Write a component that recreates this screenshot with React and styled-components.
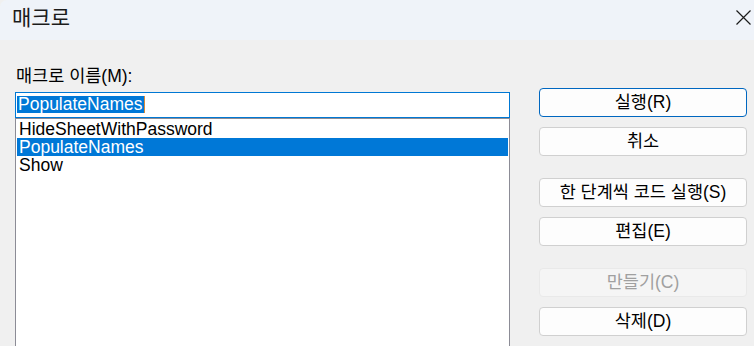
import React from "react";
import styled, { createGlobalStyle } from "styled-components";

const Global = createGlobalStyle`
  html, body { margin: 0; padding: 0; background: #f0f0f0; }
  body { font-family: "Liberation Sans", "Noto Sans CJK KR", sans-serif; color: #000; }
  * { box-sizing: border-box; }
`;

const FONT = `"Liberation Sans", "Noto Sans CJK KR", sans-serif`;

const Window = styled.div`
  width: 754px;
  height: 346px;
  overflow: hidden;
  display: flex;
  flex-direction: column;
  background: #f0f0f0;
`;

const TitleBar = styled.div`
  height: 40px;
  flex: none;
  background: #eff3f9;
  border-top-left-radius: 7px;
  display: flex;
  align-items: flex-start;
  justify-content: space-between;
  padding: 4px 3px 0 12px;
`;

const Title = styled.div`
  font-family: ${FONT};
  font-size: 21px;
  line-height: 28px;
  color: #1b1b1b;
`;

const CloseButton = styled.div`
  width: 15px;
  height: 15px;
  margin-top: 6px;
  display: flex;
`;

const Body = styled.div`
  flex: 1;
  display: flex;
  gap: 29px;
  padding: 0 7px 0 15px;
  min-height: 0;
`;

const LeftColumn = styled.div`
  width: 495px;
  flex: none;
  display: flex;
  flex-direction: column;
  padding-top: 26px;
`;

const Label = styled.div`
  font-family: ${FONT};
  font-size: 17.5px;
  line-height: 20px;
  height: 20px;
  margin: 0 0 6px 1px;
  color: #000;
`;

const NameInput = styled.div`
  height: 26px;
  border: 1px solid #0078d4;
  background: #fff;
  padding: 3px 1px 0 1px;
  display: flex;
  align-items: flex-start;
`;

const Selected = styled.span`
  font-family: ${FONT};
  font-size: 17.5px;
  line-height: 17px;
  height: 17px;
  background: #0078d7;
  color: #fff;
  padding: 0 1px;
`;

const Caret = styled.span`
  width: 1px;
  height: 17px;
  background: #d98a3a;
`;

const ListBox = styled.div`
  flex: 1;
  border: 1px solid #8c8c96;
  border-bottom: none;
  background: #fff;
  padding: 1px 1px 0 1px;
`;

const ListItem = styled.div`
  font-family: ${FONT};
  font-size: 17.5px;
  line-height: 18px;
  height: 18px;
  overflow: hidden;
  padding-left: 2px;
  white-space: nowrap;
  background: ${(p) => (p.$selected ? "#0078d7" : "transparent")};
  color: ${(p) => (p.$selected ? "#fff" : "#000")};
`;

const RightColumn = styled.div`
  width: 208px;
  flex: none;
  display: flex;
  flex-direction: column;
  padding-top: 48px;
  gap: 22px;
`;

const ButtonGroup = styled.div`
  display: flex;
  flex-direction: column;
  gap: 10px;
`;

const Button = styled.div`
  height: 29px;
  border-radius: 4px;
  border: 1px solid
    ${(p) => (p.$default ? "#0067c0" : p.$disabled ? "#e9e9e9" : "#d0d0d0")};
  background: ${(p) => (p.$disabled ? "#f5f5f5" : "#fdfdfd")};
  color: ${(p) => (p.$disabled ? "#a0a0a0" : "#000")};
  font-family: ${FONT};
  font-size: 17.5px;
  line-height: 27px;
  text-align: center;
  white-space: nowrap;
`;

const macros = ["HideSheetWithPassword", "PopulateNames", "Show"];

export default function App() {
  return (
    <>
      <Global />
      <Window>
        <TitleBar>
          <Title>매크로</Title>
          <CloseButton>
            <svg width="15" height="15" viewBox="0 0 15 15">
              <path d="M0.5 0.5 L14.5 14.5 M14.5 0.5 L0.5 14.5" stroke="#1b1b1b" strokeWidth="1.2" fill="none" />
            </svg>
          </CloseButton>
        </TitleBar>
        <Body>
          <LeftColumn>
            <Label>매크로 이름(M):</Label>
            <NameInput>
              <Selected>PopulateNames</Selected>
              <Caret />
            </NameInput>
            <ListBox>
              {macros.map((m) => (
                <ListItem key={m} $selected={m === "PopulateNames"}>
                  {m}
                </ListItem>
              ))}
            </ListBox>
          </LeftColumn>
          <RightColumn>
            <ButtonGroup>
              <Button $default>실행(R)</Button>
              <Button>취소</Button>
            </ButtonGroup>
            <ButtonGroup>
              <Button>한 단계씩 코드 실행(S)</Button>
              <Button>편집(E)</Button>
            </ButtonGroup>
            <ButtonGroup>
              <Button $disabled>만들기(C)</Button>
              <Button>삭제(D)</Button>
            </ButtonGroup>
          </RightColumn>
        </Body>
      </Window>
    </>
  );
}
